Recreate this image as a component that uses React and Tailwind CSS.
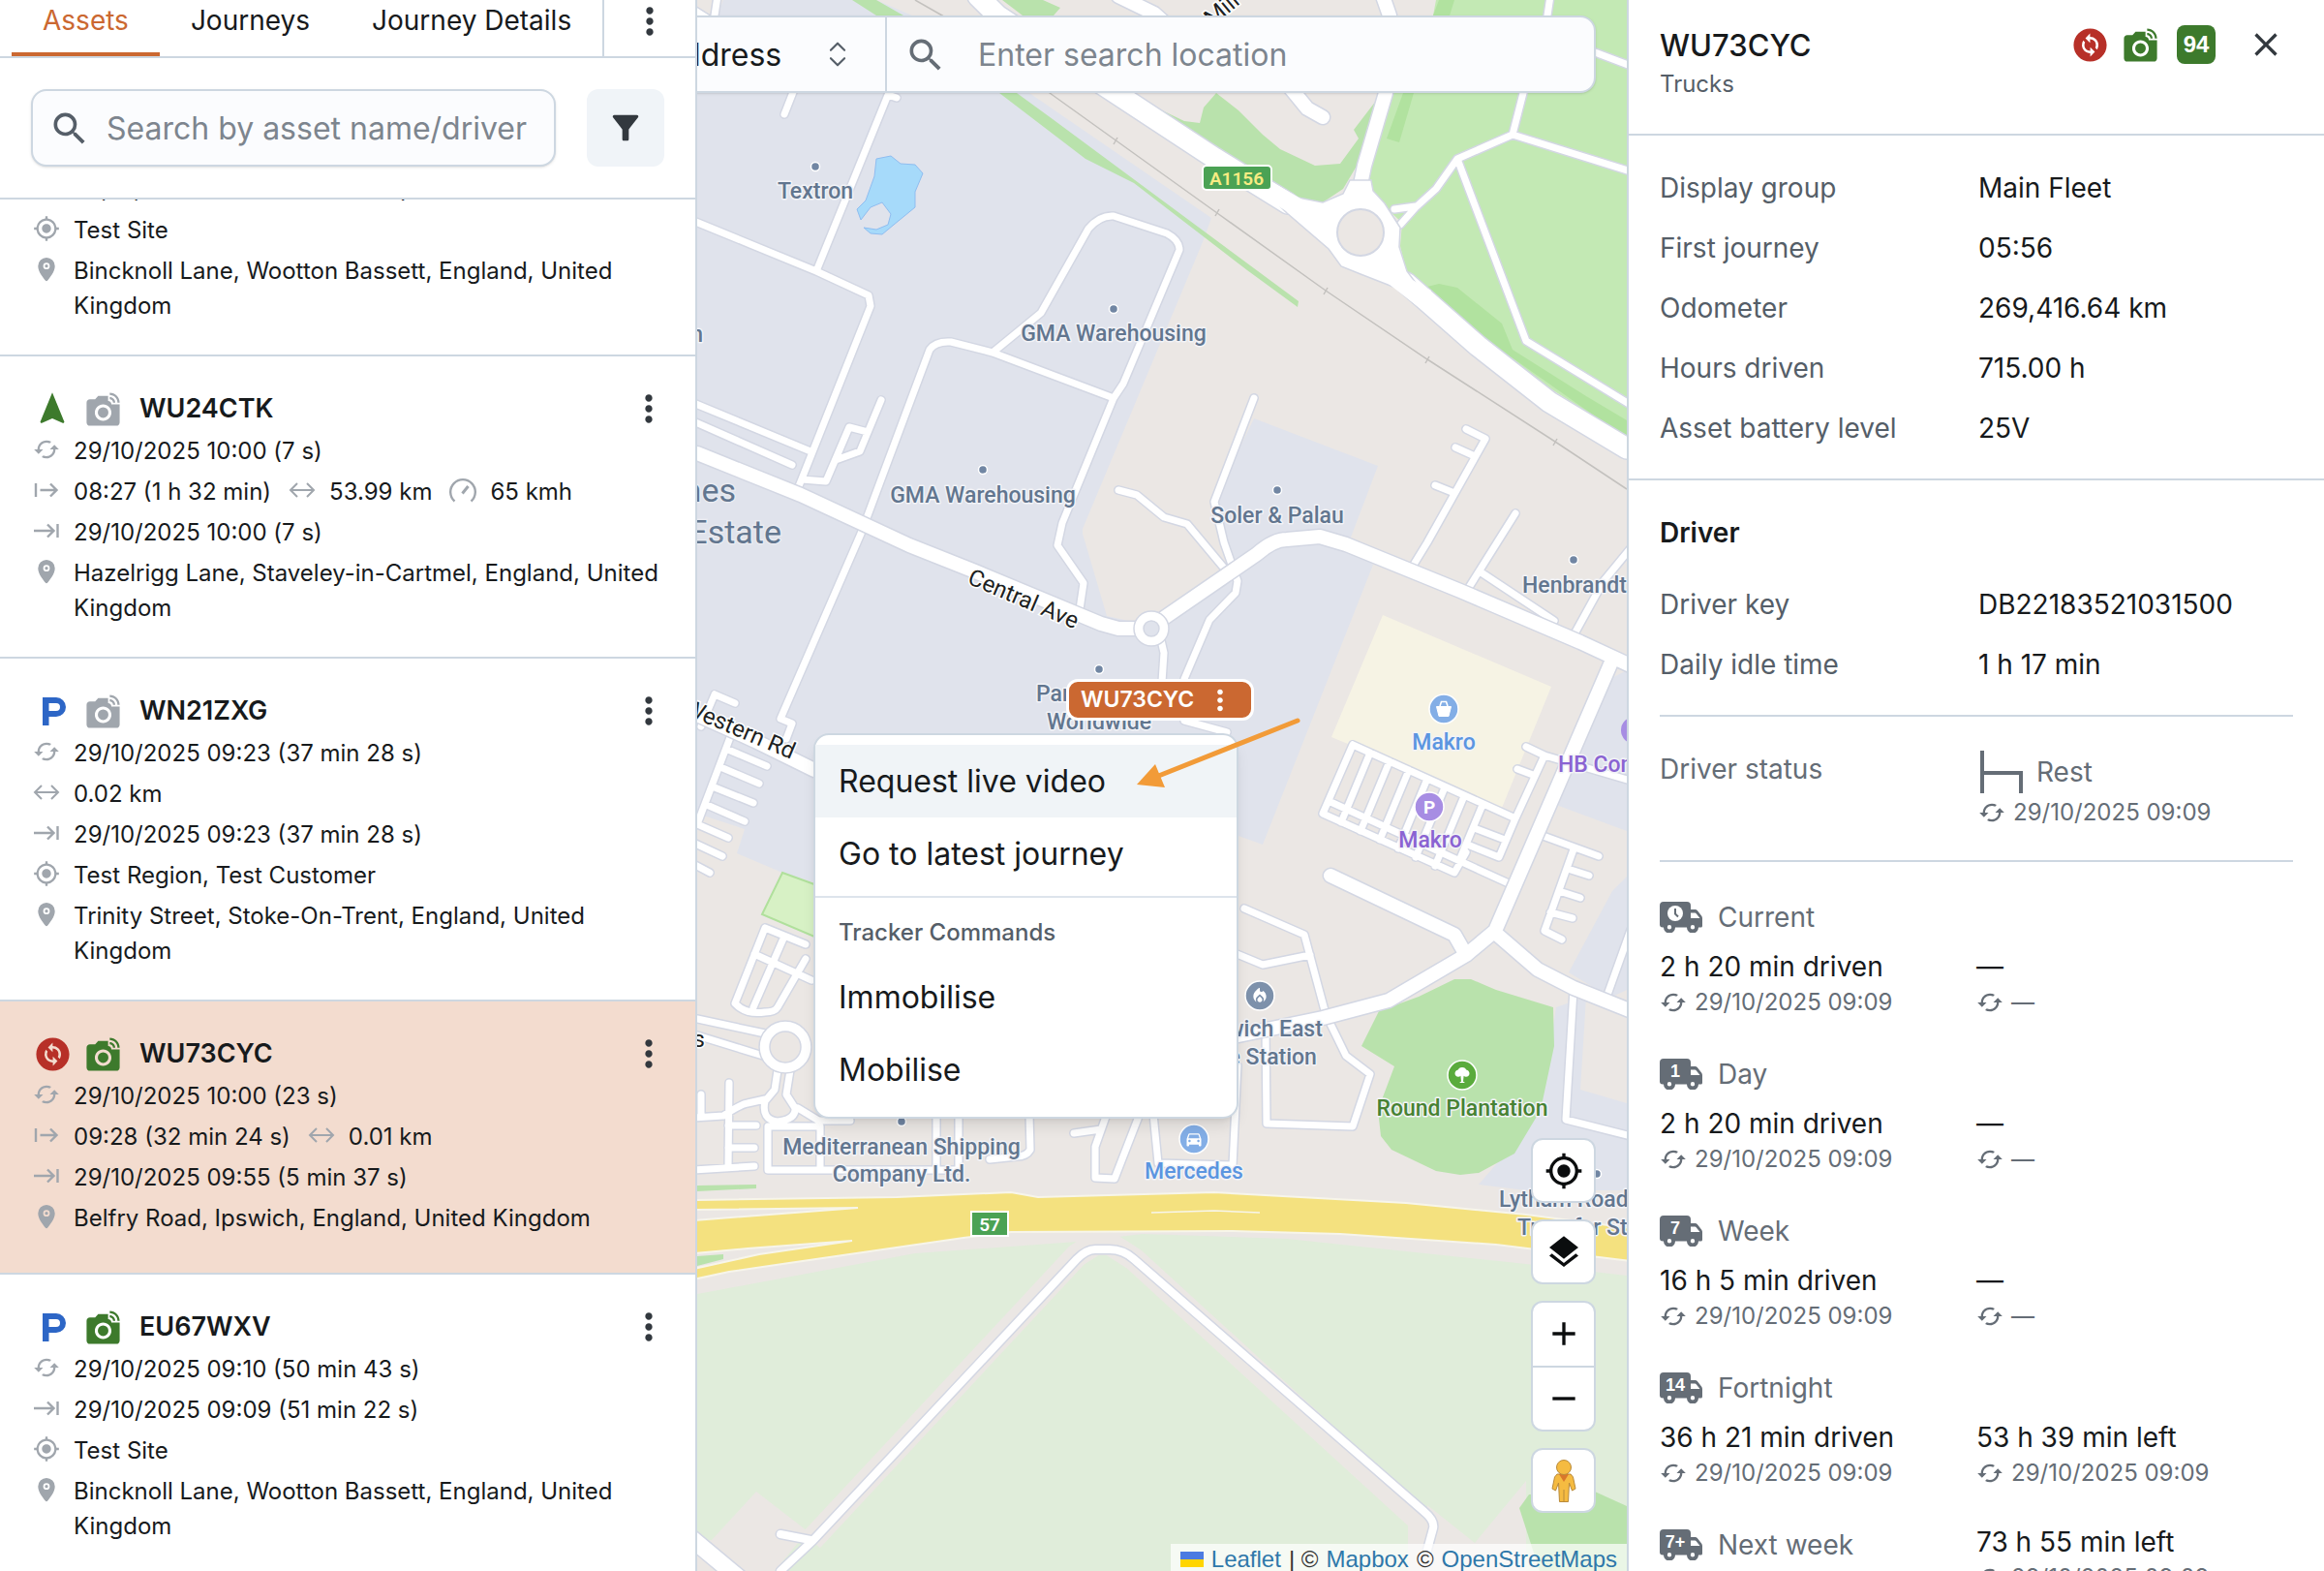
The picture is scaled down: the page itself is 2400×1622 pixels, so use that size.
import React, { useState } from "react";
import {
  MdAdd,
  MdCached,
  MdChangeCircle,
  MdClose,
  MdDirectionsCar,
  MdFilterAlt,
  MdLayers,
  MdLinkedCamera,
  MdLocalFireDepartment,
  MdMoreVert,
  MdMyLocation,
  MdNavigation,
  MdRemove,
  MdSearch,
} from "react-icons/md";
import { ChevronsUpDown } from "lucide-react";

const tabs = ["Assets", "Journeys", "Journey Details"];

const assets = [
  {
    name: "KX19LDE",
    status: "parked",
    camera: true,
    rows: [
      [{ icon: "refresh", text: "29/10/2025 09:10 (50 min 43 s)" }],
      [{ icon: "end", text: "29/10/2025 09:09 (5 min 22 s)" }],
      [{ icon: "site", text: "Test Site" }],
      [{ icon: "pin", text: "Bincknoll Lane, Wootton Bassett, England, United Kingdom" }],
    ],
  },
  {
    name: "WU24CTK",
    status: "moving",
    camera: false,
    rows: [
      [{ icon: "refresh", text: "29/10/2025 10:00 (7 s)" }],
      [
        { icon: "start", text: "08:27 (1 h 32 min)" },
        { icon: "distance", text: "53.99 km" },
        { icon: "speed", text: "65 kmh" },
      ],
      [{ icon: "end", text: "29/10/2025 10:00 (7 s)" }],
      [{ icon: "pin", text: "Hazelrigg Lane, Staveley-in-Cartmel, England, United Kingdom" }],
    ],
  },
  {
    name: "WN21ZXG",
    status: "parked",
    camera: false,
    rows: [
      [{ icon: "refresh", text: "29/10/2025 09:23 (37 min 28 s)" }],
      [{ icon: "distance", text: "0.02 km" }],
      [{ icon: "end", text: "29/10/2025 09:23 (37 min 28 s)" }],
      [{ icon: "site", text: "Test Region, Test Customer" }],
      [{ icon: "pin", text: "Trinity Street, Stoke-On-Trent, England, United Kingdom" }],
    ],
  },
  {
    name: "WU73CYC",
    status: "idle",
    camera: true,
    rows: [
      [{ icon: "refresh", text: "29/10/2025 10:00 (23 s)" }],
      [
        { icon: "start", text: "09:28 (32 min 24 s)" },
        { icon: "distance", text: "0.01 km" },
      ],
      [{ icon: "end", text: "29/10/2025 09:55 (5 min 37 s)" }],
      [{ icon: "pin", text: "Belfry Road, Ipswich, England, United Kingdom" }],
    ],
  },
  {
    name: "EU67WXV",
    status: "parked",
    camera: true,
    rows: [
      [{ icon: "refresh", text: "29/10/2025 09:10 (50 min 43 s)" }],
      [{ icon: "end", text: "29/10/2025 09:09 (51 min 22 s)" }],
      [{ icon: "site", text: "Test Site" }],
      [{ icon: "pin", text: "Bincknoll Lane, Wootton Bassett, England, United Kingdom" }],
    ],
  },
];

const details = [
  ["Display group", "Main Fleet"],
  ["First journey", "05:56"],
  ["Odometer", "269,416.64 km"],
  ["Hours driven", "715.00 h"],
  ["Asset battery level", "25V"],
];

const driverDetails = [
  ["Driver key", "DB22183521031500"],
  ["Daily idle time", "1 h 17 min"],
];

const periods = [
  { label: "Current", mark: "clock", driven: "2 h 20 min driven", left: "—", leftAt: "—" },
  { label: "Day", mark: "1", driven: "2 h 20 min driven", left: "—", leftAt: "—" },
  { label: "Week", mark: "7", driven: "16 h 5 min driven", left: "—", leftAt: "—" },
  { label: "Fortnight", mark: "14", driven: "36 h 21 min driven", left: "53 h 39 min left", leftAt: "29/10/2025 09:09" },
];

/* Icons */

const StrokeIcon = ({ children }) => (
  <svg className="h-7 w-7" viewBox="0 0 28 28" fill="none" stroke="currentColor" strokeWidth={2.4}>
    {children}
  </svg>
);

const rowIcons = {
  refresh: <MdCached size={28} />,
  site: <MdMyLocation size={28} />,
  pin: (
    <svg className="h-7 w-7" viewBox="0 0 28 28" fill="currentColor">
      <path fillRule="evenodd" d="M14 2a8.700 8.700 0 0 0-8.700 8.700C5.300 17 11 22.500 12.800 25.600a1.400 1.400 0 0 0 2.400 0C17 22.500 22.700 17 22.700 10.700A8.700 8.700 0 0 0 14 2zM14 7.300a3.400 3.400 0 1 1 0 6.800 3.400 3.400 0 0 1 0-6.800z" />
      <circle cx="14" cy="10.700" r="1.600" />
    </svg>
  ),
  start: (
    <StrokeIcon>
      <path d="M3 7v14M7.500 14h17M18 7.500l6.500 6.500-6.500 6.500" />
    </StrokeIcon>
  ),
  end: (
    <StrokeIcon>
      <path d="M1 14h20M15 7.500l6.500 6.500-6.500 6.500M25.500 7v14" />
    </StrokeIcon>
  ),
  distance: (
    <StrokeIcon>
      <path strokeWidth={2} d="M2.500 14h23M9 7l-7 7 7 7M19 7l7 7-7 7" />
    </StrokeIcon>
  ),
  speed: (
    <StrokeIcon>
      <path d="M5.500 25.500A12.800 12.800 0 1 1 22.500 25.500" />
      <path d="M13.500 17.500l6-7.500" strokeWidth={3} />
    </StrokeIcon>
  ),
};

const StatusIcon = ({ status }) => {
  if (status === "moving") return <MdNavigation size={40} className="text-[#3d7a2c]" />;
  if (status === "idle") return <MdChangeCircle size={41} className="text-[#b73028]" />;
  return (
    <svg className="ml-1 h-[29px] w-6 text-[#2d66c6]" viewBox="0 0 24 29" fill="currentColor" fillRule="evenodd">
      <path d="M0 0h14a10 10 0 0 1 0 20H6.500v9H0zM6.500 6v8H14a4 4 0 0 0 0-8z" />
    </svg>
  );
};

const TruckIcon = ({ mark }) => (
  <svg className="h-8 w-11 shrink-0 text-[#656d76]" viewBox="0 0 44 32">
    <path
      fill="currentColor"
      fillRule="evenodd"
      d="M4 0h24a4 4 0 0 1 4 4v4h4.500a3 3 0 0 1 2.300 1l4.300 5.500a4 4 0 0 1 .9 2.500V25a1.500 1.500 0 0 1-1.500 1.500H40a6 6 0 0 1-12 0H16a6 6 0 0 1-12 0H3a3 3 0 0 1-3-3V4a4 4 0 0 1 4-4zM32 11.500V17h9.500L37.500 12a1.500 1.500 0 0 0-1-.5zM10 24a2.200 2.200 0 1 0 0 4.400 2.200 2.200 0 0 0 0-4.400zM34 24a2.200 2.200 0 1 0 0 4.400 2.200 2.200 0 0 0 0-4.400z"
    />
    {mark === "clock" ? (
      <>
        <circle cx="16" cy="12" r="8" fill="#fff" />
        <path d="M16 7v5.500l3 3" fill="none" stroke="currentColor" strokeWidth="2" />
      </>
    ) : (
      <text x="16" y="19" textAnchor="middle" className="fill-white font-['Liberation_Sans',sans-serif] text-lg font-bold">
        {mark}
      </text>
    )}
  </svg>
);

const Pegman = () => (
  <svg className="h-11 w-7" viewBox="0 0 28 44" fill="#f5bb41" stroke="#b98a3a" strokeWidth="1">
    <path d="M7 15h14l2.500 3 2.500 12-3.500 2-3-8-1 19.500H9.500L8.500 24l-3 8L2 30l2.500-12z" />
    <path d="M14 31v12" />
    <path d="M9 15h10l-5 8z" fill="#d9772b" stroke="none" />
    <circle cx="14" cy="8" r="7.500" />
  </svg>
);

const RoundTree = ({ x, y }) => (
  <svg x={x} y={y} width="20" height="20" viewBox="0 0 20 20" fill="#fff">
    <path d="M10 2c2.500 0 3.800 1.300 4.200 2.600 1.800.4 3.300 1.800 3.300 3.700 0 2-1.500 3.400-3.500 3.400-1 0-1.800-.3-2.400-.9L11 16.500l2 1.500H7l2-1.500-.6-5.700c-.6.6-1.400.9-2.400.9-2 0-3.500-1.400-3.500-3.400 0-1.900 1.500-3.300 3.300-3.700C6.200 3.300 7.500 2 10 2z" />
  </svg>
);

const Basket = ({ x, y }) => (
  <svg x={x} y={y} width="20" height="20" viewBox="0 0 20 20">
    <path d="M2.500 7.500h15L15 17.500H5z" fill="#fff" stroke="#fff" strokeLinejoin="round" />
    <path d="M6 7l1.500-4.500h5L14 7" fill="none" stroke="#fff" strokeWidth="1.600" />
  </svg>
);

/* Left panel */

const AssetCard = ({ asset, selected }) => (
  <li className={selected ? "min-h-[282px] shrink-0 border-b-2 border-[#cdd7e1] bg-[#f3dccf] p-8" : "shrink-0 border-b-2 border-[#cdd7e1] p-8"}>
    <div className="mb-1 flex h-[44px] items-center">
      <span className="flex w-11 justify-center">
        <StatusIcon status={asset.status} />
      </span>
      <span className="ml-2 flex w-11 justify-center">
        <MdLinkedCamera size={41} className={asset.camera ? "text-[#3d7a2c]" : "text-[#a0a6ad]"} />
      </span>
      <h3 className="ml-4 flex-1 text-[27px] font-semibold">{asset.name}</h3>
      <button type="button" aria-label={`${asset.name} actions`} className="flex w-8 justify-center text-[#32383e]">
        <MdMoreVert size={44} className="shrink-0" />
      </button>
    </div>
    <div className="flex flex-col gap-[6px] text-2xl leading-9">
      {asset.rows.map((row, i) => (
        <div key={i} className="flex gap-4">
          {row.map((item) => (
            <div key={item.icon} className="flex gap-3">
              <span className="flex h-8 w-8 shrink-0 items-center justify-center text-[#a0a6ad]">{rowIcons[item.icon]}</span>
              <span>{item.text}</span>
            </div>
          ))}
        </div>
      ))}
    </div>
  </li>
);

const AssetPanel = ({ selected }) => {
  const [tab, setTab] = useState("Assets");

  return (
    <aside className="flex w-[30%] shrink-0 flex-col overflow-hidden border-r-2 border-[#cdd7e1] bg-white">
      <div className="flex h-[60px] shrink-0 border-b-2 border-[#cdd7e1] text-[28px] leading-7">
        <nav className="ml-3 flex shrink-0 whitespace-nowrap">
          {tabs.map((name) => (
            <button
              key={name}
              type="button"
              onClick={() => setTab(name)}
              className={name === tab ? "flex border-b-4 border-[#cb6831] px-8 pt-[7px] text-[#cb6831]" : "flex border-b-4 border-transparent px-8 pt-[7px]"}
            >
              {name}
            </button>
          ))}
        </nav>
        <button type="button" aria-label="More" className="flex flex-1 justify-center border-l-2 border-[#cdd7e1] text-[#32383e]">
          <MdMoreVert size={44} />
        </button>
      </div>

      <div className="flex shrink-0 gap-8 border-b-2 border-[#cdd7e1] p-8">
        <label className="flex h-20 flex-1 items-center rounded-2xl border-2 border-[#cdd7e1] bg-[#fbfcfe] pt-0.5 pl-4 shadow-sm">
          <MdSearch size={44} className="shrink-0 text-[#555e68]" />
          <input type="text" aria-label="Search assets" placeholder="Search by asset name/driver" className="ml-4 w-full min-w-0 bg-transparent text-[32px] placeholder-[#7d858e] outline-none" />
        </label>
        <button type="button" aria-label="Filter" className="flex h-20 w-20 items-center justify-center rounded-xl bg-[#f0f4f8] text-[#32383e]">
          <MdFilterAlt size={40} />
        </button>
      </div>

      <div className="min-h-0 flex-1 overflow-hidden">
        <ul className="-mt-[150px] flex flex-col">
          {assets.map((asset) => (
            <AssetCard key={asset.name} asset={asset} selected={asset.name === selected} />
          ))}
        </ul>
      </div>
    </aside>
  );
};

/* Map */

const wideRoads = [
  "M1010 -4L1030 16 1152 96 1254 163 1330 210",
  "M1452 292L1526 357 1600 415 1680 463",
];

const mainRoads = [
  "M720 468L827 511 939 563 1007 590 1137 644 1155 649H1174",
  "M1202 638L1298 572Q1315 557 1329 557L1363 554 1390 562 1508 610 1632 663 1690 690",
  "M720 738L780 765 841 795",
  "M1663 686L1544 961 1514 986 1434 1033 1366 1051 1279 1069",
  "M1544 963L1588 1001 1625 1020 1690 1046",
  "M1514 986L1502 965 1374 904",
  "M1428 -4L1435 16 1431 96 1409 171 1402 205",
  "M1332 90L1350 112 1366 121",
  "M1155 -4L1192 14 1210 30",
];

const minorRoads = [
  "M1601 -4L1598 16 1573 96 1562 139 1505 164 1483 195 1462 214 1446 232",
  "M1462 213L1440 216",
  "M1562 139L1684 177",
  "M1505 164L1576 352 1684 418",
  "M1647 54L1684 68",
  "M821 90L810 118",
  "M926 101L917 98 843 280",
  "M716 228L843 280 897 305 899 316 823 507",
  "M741 -4L738 16M716 10L732 20",
  "M1025 364L1058 337 1075 323 1124 236Q1136 222 1150 223L1205 241Q1218 248 1218 258L1160 396 1150 411 1097 540 1092 563 1119 602 1115 629",
  "M1150 411L1025 364 982 353Q966 352 960 361L889 551 806 742 818 747 812 763",
  "M716 416L837 466M716 435L818 480",
  "M828 495L853 497 877 441 896 446M910 413L888 466 863 475",
  "M1199 661L1202 674 1200 704",
  "M1295 411L1254 518 1264 560 1278 600 1276 612 1249 640 1223 701",
  "M1223 744L1267 756",
  "M1155 506L1174 511 1202 534 1226 541 1267 590",
  "M1514 443L1534 453 1474 560 1458 586",
  "M1503 462L1523 471M1482 501L1502 509",
  "M1565 530L1516 608M1528 590L1605 641",
  "M1684 566L1656 600 1624 658",
  "M1588 861L1651 884M1625 877L1595 961 1613 970M1619 897L1641 904M1610 920L1632 927M1601 942L1624 948",
  "M1397 769L1366 840 1502 901 1514 880M1397 769L1565 845 1548 885 1518 873M1372 827L1560 913",
  "M1576 771L1595 780 1565 845M1595 780L1684 806M1567 794L1583 800",
  "M1415 777L1385 849M1435 786L1405 858M1455 795L1425 867M1474 804L1444 876M1492 813L1462 885M1512 822L1482 894M1531 831L1508 886",
  "M1525 856L1554 867",
  "M1625 1022L1617 1156 1684 1173M1684 960L1660 1027",
  "M1285 938L1347 965 1369 1047 1390 1090 1415 1109 1397 1163 1308 1160 1307 1060",
  "M1275 984L1304 996 1353 986",
  "M1109 1170L1137 1166M1143 1150L1131 1184V1216L1151 1217 1177 1150",
  "M1191 1150L1196 1201 1273 1203 1278 1100",
  "M1063 1150L1064 1187Q1060 1194 1050 1194L1022 1197",
  "M967 1150V1206M990 1150V1208M793 1208H990M793 1163V1208M793 1163H847V1208M847 1157H878M824 1144L847 1158",
  "M716 1154L747 1152Q765 1140 772 1139L790 1135",
  "M753 1118L752 1204M724 1130V1152M716 1208L779 1204M752 1162H781M752 1185H779",
  "M720 1052L790 1067M720 1069L788 1090",
  "M803 1105L800 1125 790 1137Q786 1156 803 1158 822 1156 821 1144L812 1130 816 1105",
  "M790 958L759 1036Q770 1048 790 1045 800 1045 803 1040L832 990M779 985L838 1012M790 958L832 975M809 969L778 1040",
  "M738 717L759 726M738 717L724 750M756 756L720 851 752 865M752 774L792 791M744 792L784 809M738 813L778 829M730 831L769 848M716 870L746 884M716 892L733 901",
];

const dots = [
  [842, 172],
  [1150, 319],
  [1015, 485],
  [1319, 506],
  [1625, 578],
  [1135, 691],
  [931, 1158],
  [1649, 1212],
];

const places = [
  { text: "Textron", x: 842, y: 205 },
  { text: "GMA Warehousing", x: 1150, y: 352 },
  { text: "GMA Warehousing", x: 1015, y: 519 },
  { text: "Soler & Palau", x: 1319, y: 540 },
  { text: "Henbrandt", x: 1572, y: 612, anchor: "start" },
  { text: "Panalpina", x: 1070, y: 724, anchor: "start" },
  { text: "Worldwide", x: 1135, y: 753 },
  { text: "Makro", x: 1491, y: 774, color: "#5b95e0" },
  { text: "Makro", x: 1477, y: 875, color: "#8a63d2" },
  { text: "HB Con", x: 1609, y: 797, anchor: "start", color: "#8a63d2" },
  { text: "Ipswich East", x: 1301, y: 1070 },
  { text: "Fire Station", x: 1301, y: 1099 },
  { text: "Round Plantation", x: 1510, y: 1152, color: "#478233" },
  { text: "Mercedes", x: 1233, y: 1217, color: "#5b95e0" },
  { text: "Mediterranean Shipping", x: 931, y: 1192 },
  { text: "Company Ltd.", x: 931, y: 1220 },
  { text: "Lytham Road", x: 1548, y: 1246, anchor: "start" },
  { text: "Transfer Station", x: 1567, y: 1275, anchor: "start" },
  { text: "n", x: 726, y: 353, anchor: "end" },
];

const pois = [
  { x: 1491, y: 732, fill: "#83aee6", Icon: Basket },
  { x: 1301, y: 1028, fill: "#7d91ab", Icon: MdLocalFireDepartment },
  { x: 1510, y: 1110, fill: "#5aab3c", Icon: RoundTree },
  { x: 1233, y: 1176, fill: "#83aee6", Icon: MdDirectionsCar },
];

const Roads = ({ paths, width }) => (
  <g fill="none" strokeLinecap="round" strokeLinejoin="round">
    <path d={paths.join("")} stroke="#d3d7e3" strokeWidth={width + 3} />
    <path d={paths.join("")} stroke="#fff" strokeWidth={width} />
  </g>
);

const MapCanvas = () => (
  <svg className="absolute inset-0 h-full w-full" viewBox="720 0 960 1622" preserveAspectRatio="xMidYMid slice">
    <rect x="0" y="0" width="2400" height="1622" fill="#ebe7e4" />

    {/* industrial areas */}
    <g fill="#e0e3ec">
      <path d="M747 0H905L942 16 1063 96 1251 225 1242 250 1118 546V551L1143 636 1192 647 1270 594 1253 518 1295 432 1423 481 1393 560 1418 583 1304 872 1279 863 840 911 808 901 761 881 769 856 720 840V16H740z" />
      <path d="M1655 705L1680 692V858L1607 831z" />
      <path d="M1665 920L1680 905V1022L1663 1030 1620 1004z" />
      <path d="M1607 1040L1638 1029 1632 1125 1680 1139V1229H1576L1527 1223 1591 1149z" />
    </g>

    {/* parks and woods */}
    <path fill="#c3e9b4" d="M1483 0L1480 16 1434 96 1412 170 1415 200 1448 230 1446 254 1455 290 1520 350 1656 436 1690 455V0z" />
    <g fill="#b1e29f">
      <path d="M1474 296L1486 293 1505 297 1551 334 1562 361 1638 409 1680 434V452L1656 436 1564 371 1520 345z" />
      <path d="M1486 0H1502L1497 16H1480zM1449 96H1460L1445 147 1432 143z" />
    </g>
    <g fill="#b9e2ac">
      <path d="M1171 96L1196 112 1223 125 1239 127 1243 111 1256 96 1279 114 1304 139 1322 154 1358 171 1384 169 1403 143 1398 134 1421 104 1403 168 1387 195 1366 209 1341 204 1298 186 1242 154z" />
      <path d="M1035 0H1077L1095 8 1088 16H1056z" />
      <path d="M880 0H905L933 16 1050 96 1087 123 1341 311 1340 317 1288 279 1171 189 1121 164 1032 96 905 16z" />
      <path d="M1502 1011H1519L1545 1022 1604 1040 1605 1080 1591 1146 1564 1191 1527 1211 1508 1213 1483 1209 1437 1187 1426 1173 1423 1146 1440 1101 1406 1080 1424 1044 1465 1029z" />
      <path d="M720 1224L781 1223V1227L720 1230zM720 1297L747 1295V1300L720 1307z" />
    </g>
    <path fill="#d7f1c5" stroke="#b0e09c" strokeWidth="2" d="M808 901L841 913V967L787 944z" />
    <path fill="#a6dafa" stroke="#8fbdf0" d="M905 164L920 161 930 169 945 170 953 179 945 198V214L923 232 911 242 899 241 892 235 905 237 917 232 920 221 911 209 899 214 889 227 885 216 894 207 903 182z" />
    <path fill="#f6f3e4" d="M1428 635L1602 709 1551 834 1375 761z" />

    {/* southern fields */}
    <path fill="#e0edda" d="M720 1336L945 1294 1112 1282 1180 1274 1329 1279 1576 1305 1680 1317V1622H720z" />
    <path fill="#ebe7e4" d="M720 1592L735 1590 781 1540 834 1581 800 1622H720zM1474 1554L1523 1593 1576 1529V1622H1474z" />
    <path fill="#b9e2ac" d="M1579 1543L1647 1540 1680 1555V1622H1590L1569 1557z" />
    <path fill="none" stroke="#ebe7e4" strokeWidth="24" strokeLinejoin="round" d="M838 1590L1112 1296 1131 1284H1146L1171 1300 1466 1570V1622" />

    {/* railway */}
    <path fill="none" stroke="#c3c1be" strokeWidth="1.500" d="M945 0L973 16 1084 96 1257 220 1369 300 1474 371 1606 456 1680 505M1150 149l4-7M1255 223l4-7M1367 304l4-7M1472 375l4-7M1604 460l4-7" />

    <Roads paths={minorRoads} width={7} />
    <Roads paths={mainRoads} width={14} />
    <Roads paths={wideRoads} width={21} />
    <path
      fill="#fff"
      stroke="#d3d7e3"
      strokeWidth="1.500"
      d="M1290 181L1341 204 1366 209 1387 200 1394 186H1416L1418 197 1430 210 1446 235 1445 255 1453 280 1468 300 1446 299 1405 283 1385 275 1372 257 1329 220z"
    />
    <circle cx="1405" cy="240" r="24" fill="#ebe7e4" stroke="#d3d7e3" strokeWidth="2" />
    <path fill="#fff" d="M1286 172L1345 206 1372 215 1345 228 1312 208zM1436 276L1478 300 1466 318 1430 290z" />
    <g stroke="#d3d7e3" strokeWidth="1.500">
      <circle cx="1189" cy="649" r="18" fill="#fff" />
      <circle cx="1189" cy="649" r="8" fill="#e0e3ec" />
      <circle cx="811" cy="1081" r="27" fill="#fff" />
      <circle cx="811" cy="1081" r="16" fill="#ebe7e4" />
    </g>

    <Roads paths={["M806 1622L840 1590 1112 1300Q1122 1290 1131 1290H1146Q1160 1290 1171 1300L1470 1560Q1482 1570 1480 1578L1474 1600", "M806 1584L837 1590"]} width={8} />
    <Roads paths={["M710 1585L764 1630"]} width={17} />

    {/* dual carriageway */}
    <path
      fill="#f4e17f"
      stroke="#f7f5ea"
      strokeWidth="2"
      d="M716 1239L926 1236 1044 1231 1072 1236 1254 1231 1452 1242 1576 1254 1684 1268V1302L1545 1285 1384 1274 1273 1271 1044 1272 995 1278 815 1304 753 1313 716 1321V1310L784 1295 880 1281 772 1289 716 1294V1260L886 1247 716 1249z"
    />
    <path fill="none" stroke="#f7f5ea" strokeWidth="1.500" d="M1189 1252L1254 1250 1301 1252" />

    {/* road shields */}
    <rect x="1242" y="171" width="71" height="25" rx="4" fill="#4ba254" stroke="#fff" strokeWidth="2" />
    <text x="1277" y="191" textAnchor="middle" fill="#f8ec83" className="text-[19px] font-semibold">A1156</text>
    <rect x="1003" y="1251" width="38" height="25" fill="#4ba254" stroke="#fff" strokeWidth="2" />
    <text x="1022" y="1271" textAnchor="middle" fill="#fff" className="text-[19px] font-semibold">57</text>

    {/* street names */}
    <g fill="#1d1f22" stroke="#fff" strokeWidth="3" paintOrder="stroke" className="text-2xl">
      <text transform="translate(998 602) rotate(23)">Central Ave</text>
      <text transform="translate(817 784) rotate(23)" textAnchor="end">Western Rd</text>
      <text transform="translate(1252 28) rotate(-40)">Mill Rd</text>
      <text x="728" y="1081" textAnchor="end">s</text>
    </g>

    {dots.map(([x, y]) => (
      <circle key={`${x}-${y}`} cx={x} cy={y} r="4.500" fill="#7186a3" stroke="#fff" strokeWidth="1.500" />
    ))}

    {pois.map(({ x, y, fill, Icon }) => (
      <g key={`${x}-${y}`}>
        <circle cx={x} cy={y} r="15" fill={fill} stroke="#fff" strokeWidth="1.500" />
        <Icon x={x - 10} y={y - 10} size={20} color="#fff" />
      </g>
    ))}
    <circle cx="1476" cy="833" r="15" fill="#a78de3" stroke="#fff" strokeWidth="1.500" />
    <text x="1476" y="840" textAnchor="middle" fill="#fff" className="text-[19px] font-bold">P</text>
    <circle cx="1688" cy="754" r="14" fill="#a78de3" />

    <g stroke="#f2f3f7" strokeWidth="3" paintOrder="stroke" strokeLinejoin="round" className="text-[23px] font-medium">
      {places.map(({ text, x, y, anchor = "middle", color = "#62768f" }) => (
        <text key={`${text}-${x}-${y}`} x={x} y={y} textAnchor={anchor} fill={color}>
          {text}
        </text>
      ))}
    </g>
    <g fill="#62768f" stroke="#e9ebf1" strokeWidth="3" paintOrder="stroke" textAnchor="end" className="text-[34px]">
      <text x="760" y="518">Ransomes</text>
      <text x="807" y="561">Estate</text>
    </g>
  </svg>
);

const MapButton = ({ label, children }) => (
  <button type="button" aria-label={label} className="flex h-[67px] w-[67px] items-center justify-center rounded-xl border-2 border-[#cdd7e1] bg-white text-[#0b0d0e]">
    {children}
  </button>
);

const VehicleMenu = () => (
  <div role="menu" className="absolute top-[757px] left-[120px] w-[439px] rounded-2xl border-2 border-[#cdd7e1] bg-white pt-[10px] pb-[11px] text-[32px] shadow-lg">
    <button type="button" role="menuitem" className="flex h-[75px] w-full items-center bg-[#f0f4f7] px-6">Request live video</button>
    <button type="button" role="menuitem" className="flex h-[75px] w-full items-center px-6">Go to latest journey</button>
    <hr className="mt-[6px] border-t-2 border-[#dde4ec]" />
    <p className="flex h-[65px] items-center px-6 pt-[6px] text-2xl font-medium text-[#555e68]">Tracker Commands</p>
    <button type="button" role="menuitem" className="flex h-[75px] w-full items-center px-6">Immobilise</button>
    <button type="button" role="menuitem" className="flex h-[75px] w-full items-center px-6">Mobilise</button>
  </div>
);

const MapView = () => (
  <main className="relative min-w-0 flex-1 overflow-hidden font-['Roboto',sans-serif]">
    <MapCanvas />

    <div className="absolute inset-0 font-['Inter',sans-serif]">
      {/* Location search, its left end runs under the asset panel */}
      <div className="absolute top-4 right-8 -left-16 flex h-20 rounded-2xl border-2 border-[#cdd7e1] bg-[#fbfcfe] text-[32px] shadow-sm">
        <div className="relative flex w-[258px] shrink-0 items-center border-r-2 border-[#cdd7e1]">
          <select aria-label="Search type" className="h-full w-full appearance-none bg-transparent pt-0.5 pl-6 outline-none">
            <option>Address</option>
          </select>
          <ChevronsUpDown size={34} strokeWidth={1.5} className="pointer-events-none absolute right-8 text-[#555e68]" />
        </div>
        <label className="flex flex-1 items-center pt-0.5 pl-[18px]">
          <MdSearch size={44} className="shrink-0 text-[#656d76]" />
          <input type="text" aria-label="Location" placeholder="Enter search location" className="ml-8 w-full min-w-0 bg-transparent placeholder-[#7d858e] outline-none" />
        </label>
      </div>

      <button type="button" className="absolute top-[701px] left-[381px] flex h-[43px] w-[194px] items-center rounded-xl border-[3px] border-white bg-[#cb6831] pl-3 text-[23px] font-semibold text-white">
        WU73CYC
        <MdMoreVert size={34} className="ml-[10px]" />
      </button>

      <VehicleMenu />

      {/* Callout arrow */}
      <svg className="pointer-events-none absolute top-[738px] left-[450px] h-20 w-44" viewBox="1170 738 176 80">
        <path d="M1340 744L1194 802" stroke="#f29b38" strokeWidth="5" strokeLinecap="round" />
        <path d="M1174 810L1193 789 1203 813z" fill="#f29b38" />
      </svg>

      <div className="absolute right-8 bottom-[60px] flex flex-col gap-[17px]">
        <MapButton label="My location">
          <MdMyLocation size={40} />
        </MapButton>
        <MapButton label="Layers">
          <MdLayers size={40} />
        </MapButton>
        <div className="flex h-[135px] w-[67px] flex-col rounded-xl border-2 border-[#cdd7e1] bg-white text-[#0b0d0e]">
          <button type="button" aria-label="Zoom in" className="flex flex-1 items-center justify-center border-b-2 border-[#cdd7e1]">
            <MdAdd size={40} />
          </button>
          <button type="button" aria-label="Zoom out" className="flex flex-1 items-center justify-center">
            <MdRemove size={40} />
          </button>
        </div>
        <MapButton label="Street view">
          <Pegman />
        </MapButton>
      </div>

      <div className="absolute right-0 bottom-0 flex h-7 items-center gap-2 bg-white/70 px-[10px] pt-1 font-['Liberation_Sans',sans-serif] text-2xl whitespace-nowrap text-[#333]">
        <svg className="h-4 w-6" viewBox="0 0 24 16">
          <path fill="#4c7be1" d="M0 0h24v8H0z" />
          <path fill="#ffd500" d="M0 8h24v8H0z" />
        </svg>
        <a href="#leaflet" className="text-[#2f78aa]">Leaflet</a>
        <span>| ©</span>
        <a href="#mapbox" className="text-[#2f78aa]">Mapbox</a>
        <span>©</span>
        <a href="#osm" className="text-[#2f78aa]">OpenStreetMaps</a>
      </div>
    </div>
  </main>
);

/* Right panel */

const Updated = ({ at }) => (
  <div className="flex h-8 items-center gap-2 text-2xl text-[#656d76]">
    <MdCached size={28} className="shrink-0" />
    <span>{at}</span>
  </div>
);

const DetailList = ({ rows }) => (
  <dl className="flex flex-col gap-5">
    {rows.map(([label, value]) => (
      <div key={label} className="grid grid-cols-2 leading-[42px]">
        <dt className="text-[#555e68]">{label}</dt>
        <dd className="pl-0.5">{value}</dd>
      </div>
    ))}
  </dl>
);

const DetailsPanel = () => (
  <aside className="flex w-[30%] shrink-0 flex-col overflow-hidden border-l-2 border-[#cdd7e1] bg-white text-[28px]">
    <header className="flex h-[140px] shrink-0 border-b-2 border-[#cdd7e1] pt-[23px] pr-10 pl-8">
      <div className="flex-1">
        <h2 className="text-[31px] leading-[48px] font-medium">WU73CYC</h2>
        <p className="text-2xl leading-8 text-[#555e68]">Trucks</p>
      </div>
      <div className="flex h-[46px] items-center">
        <MdChangeCircle size={41} className="text-[#b73028]" />
        <MdLinkedCamera size={41} className="ml-[11px] text-[#3d7a2c]" />
        <span className="ml-[17px] flex h-10 w-10 items-center justify-center rounded-lg bg-[#3d7a2c] font-['Liberation_Sans',sans-serif] text-2xl font-bold text-white">94</span>
        <button type="button" aria-label="Close" className="ml-8 text-[#32383e]">
          <MdClose size={40} />
        </button>
      </div>
    </header>

    <section className="shrink-0 border-b-2 border-[#cdd7e1] px-8 pt-[33px] pb-[31px]">
      <DetailList rows={details} />
    </section>

    <section className="shrink-0 px-8">
      <h3 className="pt-[33px] pb-8 leading-[42px] font-semibold">Driver</h3>
      <DetailList rows={driverDetails} />

      <div className="mt-[31px] grid grid-cols-2 border-y-2 border-[#cdd7e1] pt-[33px] pb-[31px]">
        <p className="leading-[42px] text-[#656d76]">Driver status</p>
        <div>
          <div className="flex h-12 items-center gap-[14px] text-[#656d76]">
            <svg className="ml-1 h-11 w-11" viewBox="0 0 44 44" fill="none" stroke="currentColor" strokeWidth="4">
              <path d="M2 0v44M2 23h40v21" />
            </svg>
            <span>Rest</span>
          </div>
          <div className="flex h-9 items-center pl-0.5">
            <Updated at="29/10/2025 09:09" />
          </div>
        </div>
      </div>

      <div className="flex flex-col gap-[34px] pt-[33px]">
        {periods.map((p) => (
          <div key={p.label}>
            <div className="mb-[6px] flex h-12 items-center gap-4 text-[#656d76]">
              <TruckIcon mark={p.mark} />
              <span>{p.label}</span>
            </div>
            <div className="grid grid-cols-2 leading-[42px]">
              <div>
                <p>{p.driven}</p>
                <Updated at="29/10/2025 09:09" />
              </div>
              <div>
                <p>{p.left}</p>
                <Updated at={p.leftAt} />
              </div>
            </div>
          </div>
        ))}
        <div className="grid grid-cols-2">
          <div className="flex h-12 items-center gap-4 text-[#656d76]">
            <TruckIcon mark="7+" />
            <span>Next week</span>
          </div>
          <div className="leading-[42px]">
            <p>73 h 55 min left</p>
            <Updated at="29/10/2025 09:09" />
          </div>
        </div>
      </div>
    </section>
  </aside>
);

const App = () => (
  <div className="flex h-screen overflow-hidden bg-white font-['Inter',sans-serif] text-[#171a1c]">
    <AssetPanel selected="WU73CYC" />
    <MapView />
    <DetailsPanel />
  </div>
);

export default App;
